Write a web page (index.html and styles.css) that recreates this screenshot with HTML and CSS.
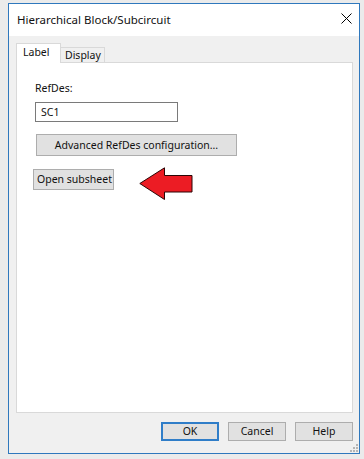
FILE: index.html
```html
<!DOCTYPE html>
<html>
<head>
<meta charset="utf-8">
<link rel="stylesheet" href="styles.css">
</head>
<body>
<div class="window">
  <div class="titlebar">
    <span class="title">Hierarchical Block/Subcircuit</span>
    <svg class="close" width="11" height="11" viewBox="0 0 11 11"><path d="M0.5 0.5 L10.5 10.5 M10.5 0.5 L0.5 10.5" stroke="#000" stroke-width="1" fill="none"/></svg>
  </div>
  <div class="client">
    <div class="tabs">
      <div class="tab active">Label</div>
      <div class="tab">Display</div>
    </div>
    <div class="panel">
      <div class="label">RefDes:</div>
      <div class="textbox">SC1</div>
      <div class="btn adv">Advanced RefDes configuration...</div>
      <div class="row">
        <div class="btn open">Open subsheet</div>
        <svg class="arrow" width="55" height="35" viewBox="0 0 55 35"><polygon points="0.8,16.5 25.5,0.8 25.5,8.5 53,8.5 53,25 25.5,25 25.5,32.5" fill="#ec1c24" stroke="#2a0505" stroke-width="1" stroke-linejoin="miter"/></svg>
      </div>
    </div>
    <div class="footer">
      <div class="btn fbtn ok">OK</div>
      <div class="btn fbtn">Cancel</div>
      <div class="btn fbtn">Help</div>
    </div>
  </div>
  <svg class="grip" width="8" height="8" viewBox="0 0 8 8">
    <rect x="6" y="0" width="2" height="2" fill="#b5b5b5"/>
    <rect x="3" y="3" width="2" height="2" fill="#b5b5b5"/>
    <rect x="6" y="3" width="2" height="2" fill="#b5b5b5"/>
    <rect x="0" y="6" width="2" height="2" fill="#b5b5b5"/>
    <rect x="3" y="6" width="2" height="2" fill="#b5b5b5"/>
    <rect x="6" y="6" width="2" height="2" fill="#b5b5b5"/>
  </svg>
</div>
</body>
</html>
```
FILE: styles.css
```css
html, body {
  margin: 0;
  padding: 0;
}
body {
  background: #ebebeb;
  font-family: "Noto Sans", "Open Sans", sans-serif;
  font-size: 10.5px;
  color: #111;
  width: 364px;
  height: 459px;
  overflow: hidden;
  white-space: nowrap;
}
.window {
  position: relative;
  margin: 3px 0 0 8px;
  width: 352px;
  height: 451px;
  box-sizing: border-box;
  border: 1px solid #2f78bd;
  display: flex;
  flex-direction: column;
}
.titlebar {
  height: 32px;
  background: #fff;
  display: flex;
  align-items: center;
  justify-content: space-between;
  padding: 0 7px 0 8px;
}
.title {
  font-size: 11.5px;
  margin-top: -2px;
}
.close {
  display: block;
  margin-top: -3px;
}
.client {
  flex: 1;
  background: #f0f0f0;
  padding: 7px 6px 0 7px;
  display: flex;
  flex-direction: column;
}
.tabs {
  display: flex;
  align-items: flex-end;
  height: 19px;
}
.tab {
  box-sizing: border-box;
  height: 15px;
  width: 44px;
  border: 1px solid #d9d9d9;
  border-bottom: none;
  border-left: none;
  background: #f0f0f0;
  line-height: 14px;
  padding-left: 4px;
}
.tab.active {
  position: relative;
  z-index: 1;
  height: 20px;
  width: 45px;
  margin-bottom: -1px;
  border-left: 1px solid #d9d9d9;
  background: #fff;
  line-height: 17px;
  padding-left: 6px;
}
.panel {
  height: 351px;
  box-sizing: border-box;
  background: #fff;
  border: 1px solid #d9d9d9;
  padding: 17px 0 0 18px;
}
.label {
  line-height: 16px;
}
.textbox {
  margin-top: 6px;
  box-sizing: border-box;
  width: 143px;
  height: 20px;
  border: 1px solid #7a7a7a;
  line-height: 18px;
  padding-left: 5px;
}
.btn {
  box-sizing: border-box;
  background: #e1e1e1;
  border: 1px solid #adadad;
  text-align: center;
}
.adv {
  margin: 12px 0 0 1px;
  width: 201px;
  height: 22px;
  line-height: 20px;
}
.row {
  display: flex;
  align-items: flex-start;
  margin-top: 11px;
}
.open {
  margin: 2px 0 0 -2px;
  width: 81px;
  height: 21px;
  line-height: 19px;
  text-align: left;
  padding-left: 3px;
}
.arrow {
  display: block;
  margin-left: 25px;
}
.footer {
  display: flex;
  justify-content: flex-end;
  gap: 9px;
  margin-top: 9px;
}
.fbtn {
  width: 58px;
  height: 19px;
  line-height: 17px;
}
.ok {
  border: 2px solid #2f7dc8;
  line-height: 15px;
}
.grip {
  position: absolute;
  right: 1px;
  bottom: 1px;
  display: block;
}
```
